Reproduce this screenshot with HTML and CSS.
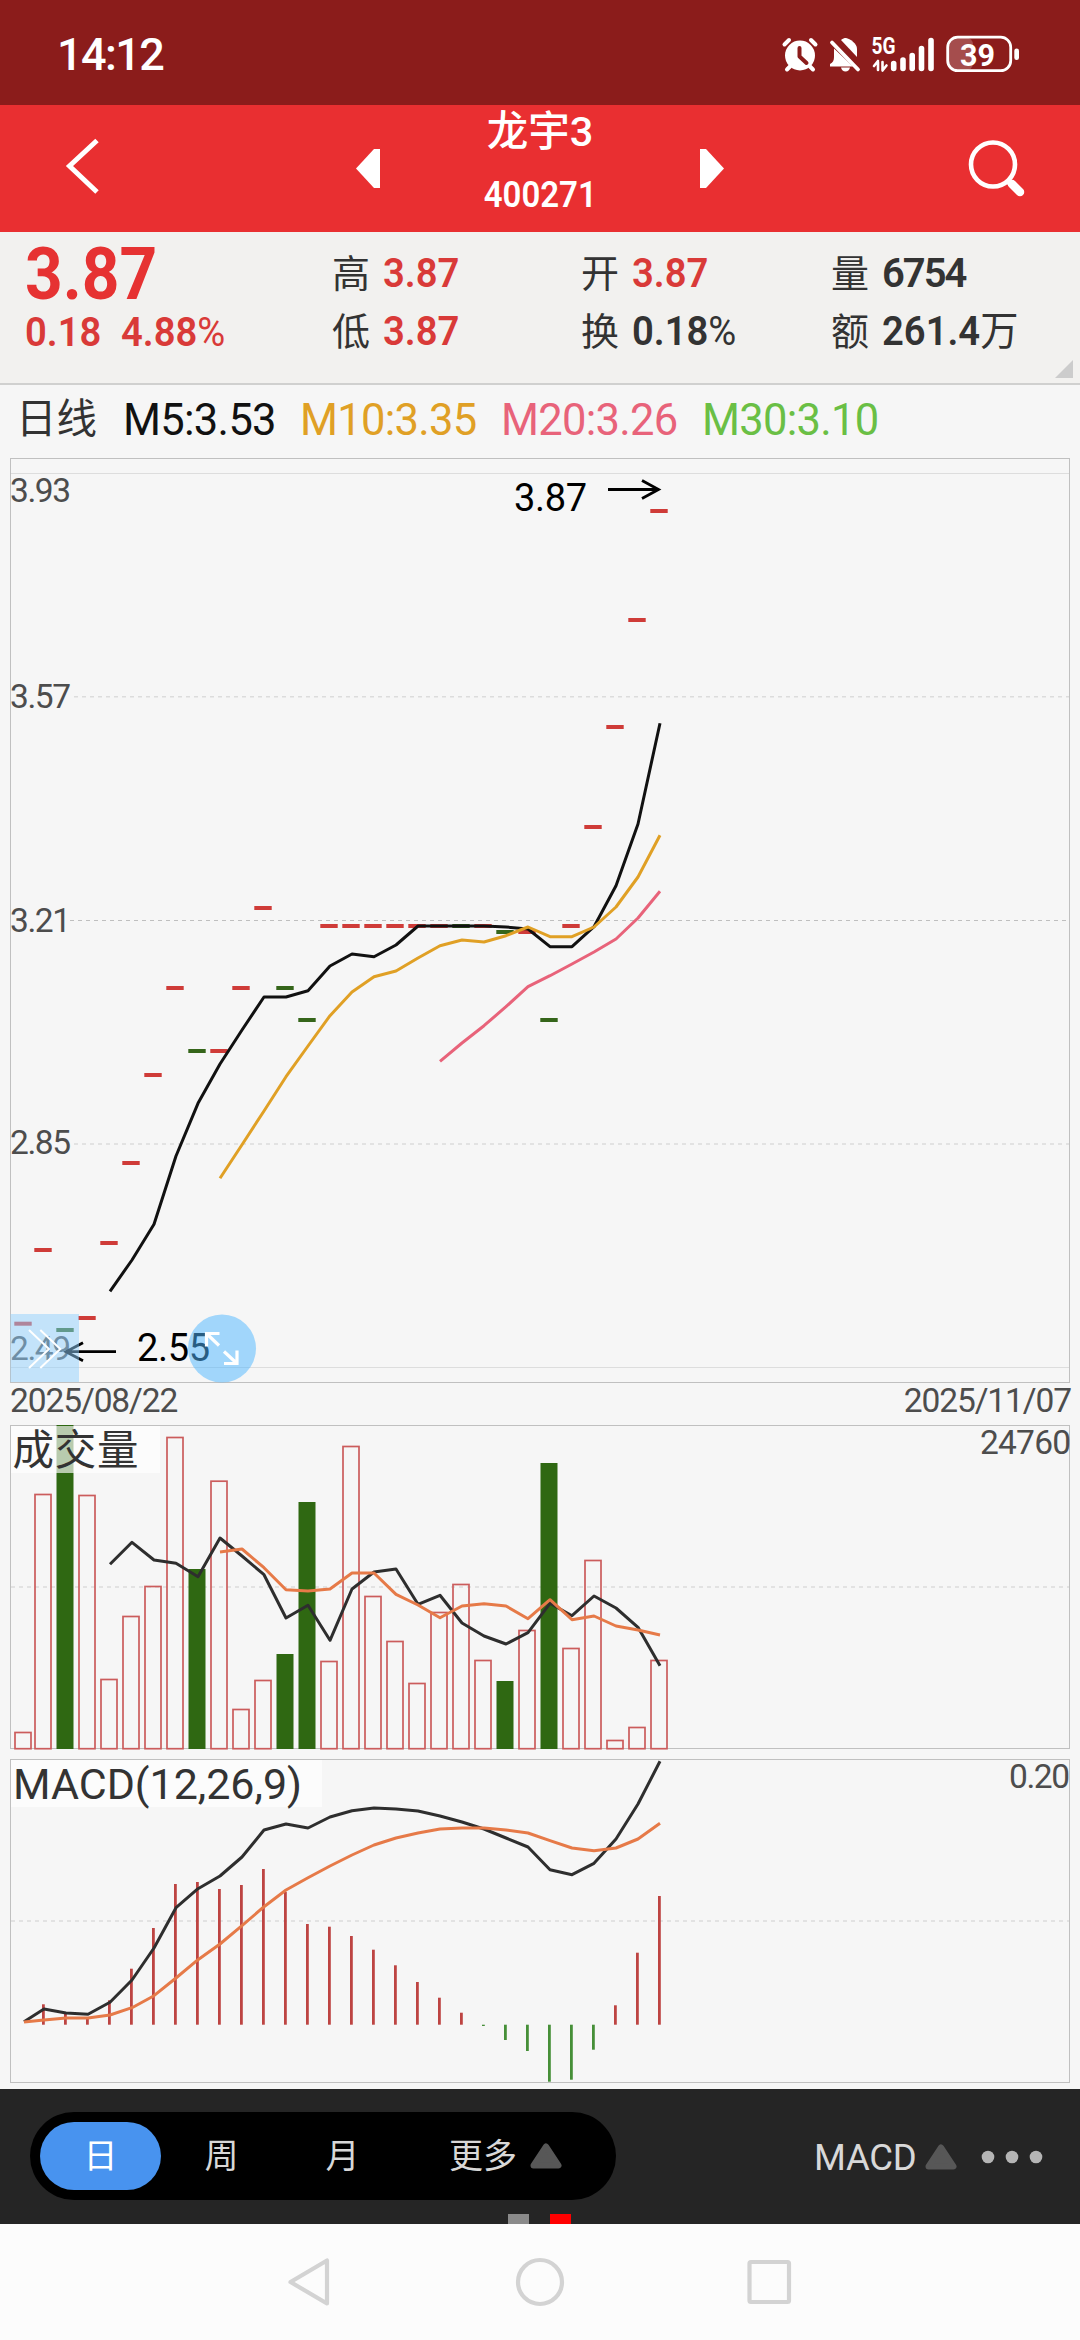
FILE: index.html
```html
<!DOCTYPE html>
<html lang="zh-CN">
<head>
<meta charset="utf-8">
<title>龙宇3 400271</title>
<link rel="stylesheet" href="styles.css">
</head>
<body>
<header class="status">
  <span class="clock">14:12</span>
  <svg class="status-icons" width="250" height="50" viewBox="774 29.500 250 50">
    <g fill="#fff" stroke="#fff" stroke-linecap="round" stroke-linejoin="round">
      <circle cx="799" cy="55" r="15" stroke="none"/>
      <path d="M783.5 44l4.500-4.500M814.500 44l-4.500-4.500" stroke-width="4"/>
      <path d="M789 66l-3 3M809 66l3 3" stroke-width="4"/>
      <path d="M798.500 47.500v8.500l7 6.500" stroke="#8b1c1b" fill="none" stroke-width="4"/>
      <path d="M840 39.500c2-1.500 3-2 5-2 4 1 11 5 11 11v8z" stroke="none"/>
      <path d="M833 48l19 18h-23v-2.500c3-1.500 4-3.500 4-7z" stroke="none"/>
      <path d="M831 42l26 27" fill="none" stroke-width="3.800"/>
      <path d="M840 67h9q-1 4-4.500 4t-4.500-4z" stroke="none"/>
      <path d="M877 61.500v8M873 65.500l4-5M881.500 61.500v8M881.500 70l4-5" fill="none" stroke-width="2.600"/>
      <path d="M892.700 63v5M902 59.500v8.500M911.200 55v13M920.500 48v20M930 40v28" fill="none" stroke-width="5.600"/>
    </g>
    <text class="t b" x="870.500" y="53.500" font-size="23.500" fill="#fff" textLength="24" lengthAdjust="spacingAndGlyphs">5G</text>
    <rect x="947" y="37" width="25" height="33" rx="7" fill="#a54d4d"/>
    <rect x="946.700" y="36.700" width="63" height="33.500" rx="10" fill="none" stroke="#fff" stroke-width="2.800"/>
    <rect x="1013.300" y="48" width="4.700" height="11.500" rx="2.300" fill="#fff"/>
    <text class="t b" x="959" y="65" font-size="32" fill="#fff" textLength="35" lengthAdjust="spacingAndGlyphs">39</text>
  </svg>
</header>

<nav class="titlebar">
  <svg width="110" height="126" viewBox="0 105 110 126"><path d="M97 140.500L69.500 166L97 192" fill="none" stroke="#fff" stroke-width="5"/></svg>
  <div class="switcher">
    <svg width="24" height="39" viewBox="0 0 24 39"><path d="M24 0h-6L0 19.500L18 39h6z" fill="#fff"/></svg>
    <div class="names">
      <div class="name">龙宇3</div>
      <div class="code">400271</div>
    </div>
    <svg width="24" height="39" viewBox="0 0 24 39"><path d="M0 0h6L24 19.500L6 39H0z" fill="#fff"/></svg>
  </div>
  <svg width="110" height="126" viewBox="970 105 110 126"><circle cx="993" cy="164.500" r="22" fill="none" stroke="#fff" stroke-width="4.600"/><path d="M1008 181l4 4" stroke="#fff" stroke-width="6"/><path d="M1012 184l8 8" stroke="#fff" stroke-width="8.500" stroke-linecap="round"/></svg>
</nav>

<section class="quote">
  <div class="last">
    <div class="price"><span class="big">3.87</span></div>
    <div class="change"><span class="v up">0.18</span><span class="v up">4.88<span class="unit">%</span></span></div>
  </div>
  <dl class="stats">
    <div><dt>高</dt><dd class="v up">3.87</dd></div>
    <div><dt>开</dt><dd class="v up">3.87</dd></div>
    <div><dt>量</dt><dd class="v wide">6754</dd></div>
    <div><dt>低</dt><dd class="v up">3.87</dd></div>
    <div><dt>换</dt><dd class="v">0.18<span class="unit">%</span></dd></div>
    <div><dt>额</dt><dd class="v">261.4<span class="unit">万</span></dd></div>
  </dl>
  <i class="corner"></i>
</section>

<section class="averages">
  <span class="kind">日线</span>
  <span class="m5">M5:3.53</span>
  <span class="m10">M10:3.35</span>
  <span class="m20">M20:3.26</span>
  <span class="m30">M30:3.10</span>
</section>

<main class="charts">
  <svg id="price" width="1080" height="926" viewBox="0 458 1080 926">
    <rect class="frame" x="10.500" y="458.500" width="1059" height="924"/>
    <path class="soft" d="M11 473.500H1069M11 1367.500H1069"/>
    <path class="dash" d="M74 696.700H1069M74 1144H1069"/>
    <path class="dash strong" d="M70 920.500H1069"/>
    <g class="t" fill="#4d4d4d" font-size="33.500">
      <text x="10" y="502" textLength="61">3.93</text>
      <text x="10" y="707.500" textLength="61">3.57</text>
      <text x="10" y="932" textLength="61">3.21</text>
      <text x="10" y="1154" textLength="61">2.85</text>
      <text x="10" y="1359.500" textLength="61">2.49</text>
    </g>
    <g class="t" fill="#000" font-size="38">
      <text x="514" y="511" textLength="73">3.87</text>
      <text x="137" y="1361" textLength="73">2.55</text>
    </g>
    <path class="arrow" d="M608 489.500H658M642 480.500L658.500 489.500L642 498.500M116 1351.700H66M83 1342.700L66 1351.700L83 1360.700"/>
  </svg>
  <div class="dates"><span>2025/08/22</span><span>2025/11/07</span></div>
  <svg id="volume" width="1080" height="326" viewBox="0 1425 1080 326">
    <rect class="frame" x="10.500" y="1425.500" width="1059" height="323"/>
    <path class="dash" d="M11 1587H1069"/>
  </svg>
  <svg id="macd" width="1080" height="330" viewBox="0 1759 1080 330">
    <rect class="frame" x="10.500" y="1759.500" width="1059" height="323"/>
    <path class="dash" d="M11 1921H1069"/>
  </svg>
</main>

<footer class="toolbar">
  <div class="pill">
    <span class="tab on">日</span><span class="tab">周</span><span class="tab">月</span>
    <span class="tab more">更多<svg width="32" height="26" viewBox="0 0 32 26"><path d="M16 3.500L28.500 22.500H3.500z" fill="#575757" stroke="#575757" stroke-width="6" stroke-linejoin="round"/></svg></span>
  </div>
  <div class="indicator"><span>MACD</span><svg width="32" height="26" viewBox="0 0 32 26"><path d="M16 3.500L28.500 22.500H3.500z" fill="#575757" stroke="#575757" stroke-width="6" stroke-linejoin="round"/></svg></div>
  <svg class="dots" width="62" height="14" viewBox="0 0 62 14" fill="#b5b5b5"><circle cx="7" cy="7" r="6.300"/><circle cx="31" cy="7" r="6.300"/><circle cx="55" cy="7" r="6.300"/></svg>
  <div class="pages"><i></i><i class="cur"></i></div>
</footer>
<div class="sysnav">
  <svg width="504" height="50" viewBox="288 2257 504 50" fill="none" stroke="#d3d3d3" stroke-width="4.200" stroke-linejoin="round">
    <path d="M290.500 2282L327 2260.500V2303.500z"/><circle cx="540" cy="2282" r="22"/><rect x="749.500" y="2262" width="39.500" height="40" rx="1.500"/>
  </svg>
</div>
<script src="chart.js"></script>
</body>
</html>
```
FILE: styles.css
```css
* { box-sizing: border-box; margin: 0; padding: 0; }
body {
  width: 1080px; height: 2340px; overflow: hidden;
  display: flex; flex-direction: column;
  background: #f6f6f6; color: #333;
  font-family: Roboto, "Noto Sans CJK SC", sans-serif;
}
svg { display: block; flex: none; overflow: visible; }
.t { font-family: Roboto, "Noto Sans CJK SC", sans-serif; }
.b { font-weight: 700; }

.status {
  height: 105px; background: #8b1c1b; color: #fff;
  display: flex; justify-content: space-between; align-items: flex-start;
  padding: 30px 55px 0 57px;
}
.clock { font-size: 45px; line-height: 50px; font-weight: 500; letter-spacing: -1.6px; }

.titlebar { height: 127px; background: #e92f31; color: #fff; display: flex; justify-content: space-between; }
.switcher { width: 368px; display: flex; justify-content: space-between; align-items: center; }
.names { height: 127px; text-align: center; }
.name { font-size: 41.500px; line-height: 54px; font-weight: 500; }
.code { font-size: 37.500px; line-height: 46px; margin-top: 12px; font-weight: 600; transform: scaleX(.88); }

.quote { height: 153px; background: #f2f1ef; border-bottom: 2px solid #d0d0cf; display: flex; position: relative; padding-top: 13px; }
.last { width: 333px; padding-left: 25px; color: #e63232; }
.price { height: 60px; display: flex; align-items: center; }
.big { font-size: 71.500px; line-height: 60px; font-weight: 700; transform: scaleX(.92); transform-origin: left; }
.change { display: grid; grid-template-columns: 96px auto; justify-content: start; }
.v { font-size: 40px; font-weight: 600; line-height: 55px; transform: scaleX(.955); transform-origin: left; white-space: nowrap; }
.up { color: #d93a38; }
.wide { transform: none; letter-spacing: -2px; }
.stats { display: grid; grid-template-columns: 249px 250px 249px; grid-template-rows: 58px 58px; }
.stats div { display: flex; align-items: center; }
.stats .v { line-height: 58px; }
dt { width: 51px; font-size: 38px; line-height: 58px; }
.unit { font-weight: 400; font-size: 40px; }
.corner { position: absolute; right: 7px; bottom: 5px; width: 18px; height: 18px; background: #ccc; clip-path: polygon(100% 0, 100% 100%, 0 100%); }

.averages {
  height: 73px; font-size: 43.5px; letter-spacing: -.7px; line-height: 71px; white-space: nowrap;
  display: grid; grid-template-columns: 107px 177px 201px 201px auto; padding-left: 16px; justify-content: start;
}
.kind { font-size: 40.5px; letter-spacing: 0; line-height: 69px; }
.m5 { color: #111; }
.m10 { color: #e0a025; }
.m20 { color: #e8637a; }
.m30 { color: #6abf45; }

.charts { height: 1631px; display: flex; flex-direction: column; }
.dates { height: 41px; display: flex; justify-content: space-between; padding: 0 9px 0 10px; font-size: 33.500px; line-height: 33px; color: #4d4d4d; letter-spacing: -1.1px; }
#macd { margin-top: 8px; }
.frame { fill: none; stroke: #c0c0c0; }
.soft { stroke: #ddd; }
.dash { stroke: #dcdcdc; stroke-width: 1.600; stroke-dasharray: 4 4; }
.strong { stroke: #bfbfbf; stroke-width: 1; }
.arrow { fill: none; stroke: #000; stroke-width: 2.800; }
.line { fill: none; stroke-width: 3; stroke-linejoin: round; }

.toolbar { height: 135px; background: #252525; position: relative; display: flex; align-items: center; padding: 0 37px 0 30px; }
.pill { width: 586px; height: 88px; margin-top: -1px; border-radius: 44px; background: #000; display: flex; align-items: center; padding-left: 10px; }
.pill, .indicator { color: #d8d8d8; font-size: 34px; }
.tab { flex: none; width: 121px; height: 68px; line-height: 69px; text-align: center; }
.on { background: #4893ef; color: #fff; border-radius: 34px; }
.more { width: 160px; display: flex; align-items: center; gap: 13px; margin-left: 46px; }
.indicator { margin-left: 198px; display: flex; align-items: center; gap: 10px; }
.indicator span { font-size: 36.500px; line-height: 44px; padding-top: 2px; width: 101px; letter-spacing: -.3px; }
.dots { margin-left: auto; }
.pages { position: absolute; left: 508px; bottom: 0; display: flex; gap: 21px; }
.pages i { width: 21px; height: 10px; background: #8a8a8a; }
.pages .cur { background: #f00; }
.sysnav { flex: 1; background: #fcfcfc; display: flex; align-items: center; justify-content: center; }
```
FILE: chart.js
```js
const NS = 'http://www.w3.org/2000/svg';
const GREEN = new Set([2, 8, 12, 13, 20, 22, 24]);
const cx = i => (i ? 21 + 22 * i : 23);

function add(parent, tag, attrs, text) {
  const el = document.createElementNS(NS, tag);
  for (const k in attrs) el.setAttribute(k, attrs[k]);
  if (text) el.textContent = text;
  parent.appendChild(el);
  return el;
}
function line(parent, start, color, ys) {
  const points = ys.map((y, k) => `${22 + 22 * (start + k) + (start + k ? 0 : 2)},${y}`).join(' ');
  add(parent, 'polyline', { class: 'line', stroke: color, points });
}
function title(parent, y, boxWidth, size, text, textY, x, length) {
  add(parent, 'rect', { x: 11, y, width: boxWidth, height: 47, fill: '#fff', 'fill-opacity': .66 });
  add(parent, 'text', { class: 't', x, y: textY, 'font-size': size, fill: '#333', textLength: length }, text);
}

const price = document.getElementById('price');
[1323.7, 1250, 1330, 1318, 1243, 1163, 1075, 988, 1051, 1051, 988, 908, 988, 1020,
 926, 926, 926, 926, 926, 926, 926, 926, 932, 932, 1020, 926, 827, 727, 620, 511].forEach((y, i) =>
  add(price, 'rect', { x: cx(i) - 8.7, y: y - 2, width: 17.4, height: 4, fill: GREEN.has(i) ? '#35651a' : '#cf3b38' }));
line(price, 4, '#111', [1291.3, 1260, 1224.3, 1156, 1103.3, 1064, 1030, 997, 997, 990.7, 966, 954, 956.7,
  945, 926, 926, 926, 926, 927, 929, 946.7, 946.7, 926.7, 885.7, 824, 723.3]);
line(price, 9, '#e0a025', [1178.3, 1144.7, 1111, 1076.7, 1046, 1015.7, 992, 976.7, 971, 958, 945.7, 940, 942,
  935.7, 927, 936.7, 936.7, 927, 907, 877, 835.3]);
line(price, 19, '#e8637a', [1061.3, 1043, 1025.7, 1006.7, 986.7, 975.7, 964, 952, 939, 918, 891.3]);
add(price, 'rect', { x: 10.5, y: 1314, width: 68.5, height: 68, fill: '#90d0fe', 'fill-opacity': .5 });
add(price, 'path', { d: 'M29 1330L49 1349L29 1368M40.300 1330L60.300 1349L40.300 1368', fill: 'none', stroke: '#fff', 'stroke-width': 2 });
add(price, 'circle', { cx: 222, cy: 1348.5, r: 34, fill: '#4eb7ff', 'fill-opacity': .51 });
add(price, 'path', { d: 'M219.500 1333.500H206.500V1346.500M206.500 1333.500L219 1345.500M224 1363.500H237V1350.500M237 1363.500L224 1351.500', fill: 'none', stroke: '#fff', 'stroke-width': 3.2 });

const volume = document.getElementById('volume');
[1732.3, 1494.3, 1425, 1495.3, 1679.3, 1616.3, 1586.3, 1437.3, 1569, 1481, 1709.3, 1680.3, 1654, 1502, 1661.3,
 1446.3, 1596.3, 1641.3, 1683.3, 1612.3, 1584.3, 1660.3, 1681, 1630.3, 1463, 1648.3, 1560.3, 1740.3, 1727.3, 1660.3].forEach((y, i) => {
  if (GREEN.has(i) && i !== 20) add(volume, 'rect', { x: cx(i) - 8.5, y, width: 17, height: 1749 - y, fill: '#2f6812' });
  else add(volume, 'rect', { x: cx(i) - 8, y: y + .2, width: 16, height: 1748.5 - y, fill: 'none', stroke: '#cb5c5c', 'stroke-width': 1.7 });
});
line(volume, 4, '#2e2e2e', [1564.3, 1542.3, 1560, 1563.3, 1576.7, 1538, 1556, 1574.7, 1618, 1605.3, 1640.3, 1589, 1572,
  1569, 1604.3, 1595.3, 1623, 1636, 1644, 1632.7, 1603.3, 1615.7, 1596, 1608, 1627.3, 1665.7]);
line(volume, 9, '#e67a48', [1552, 1549, 1567.7, 1589.7, 1591, 1589, 1573, 1573, 1594.3, 1605, 1617.7, 1606, 1603.7, 1606,
  1618.7, 1599.7, 1619.7, 1616, 1626, 1630, 1635]);
title(volume, 1426, 149, 41.5, '成交量', 1465, 12.5, 126);
add(volume, 'text', { class: 't', x: 980, y: 1454, 'font-size': 33.5, fill: '#4d4d4d', textLength: 91 }, '24760');

const macd = document.getElementById('macd');
const BASE = 2024.7;
[0, 2004.3, 2014, 2018, 2000.3, 1968.7, 1928, 1884, 1882, 1889, 1885, 1869, 1892, 1924, 1926.7, 1936, 1949.7, 1965.3,
 1982, 1997.7, 2012.7, 2026, 2040, 2051, 2081.7, 2079.7, 2049.7, 2005.3, 1952.7, 1896].forEach((y, i) => {
  if (i) add(macd, 'rect', { x: cx(i) - 1, y: Math.min(y, BASE), width: 2.8, height: Math.abs(BASE - y), fill: y > BASE ? '#468f38' : '#bd4442' });
});
line(macd, 0, '#2e2e2e', [2021.7, 2009, 2013, 2014.3, 2002.3, 1980, 1948, 1907.7, 1888.7, 1876, 1857, 1830, 1824, 1828, 1817,
  1810.7, 1808, 1809, 1811, 1816, 1822, 1829, 1838, 1847, 1869.7, 1874.7, 1863.3, 1839, 1804, 1761.3]);
line(macd, 0, '#e67a48', [2022, 2020, 2018, 2018, 2015, 2007.7, 1995.7, 1978, 1959.7, 1944, 1925.7, 1906.7, 1890, 1877.7, 1866,
  1855, 1845, 1838, 1833, 1829, 1828, 1828, 1830, 1833, 1840.7, 1848, 1850.7, 1848, 1839, 1823.3]);
title(macd, 1760, 311, 43, 'MACD(12,26,9)', 1799, 13, 289);
add(macd, 'text', { class: 't', x: 1009, y: 1788, 'font-size': 33.5, fill: '#4d4d4d', textLength: 61 }, '0.20');
```
